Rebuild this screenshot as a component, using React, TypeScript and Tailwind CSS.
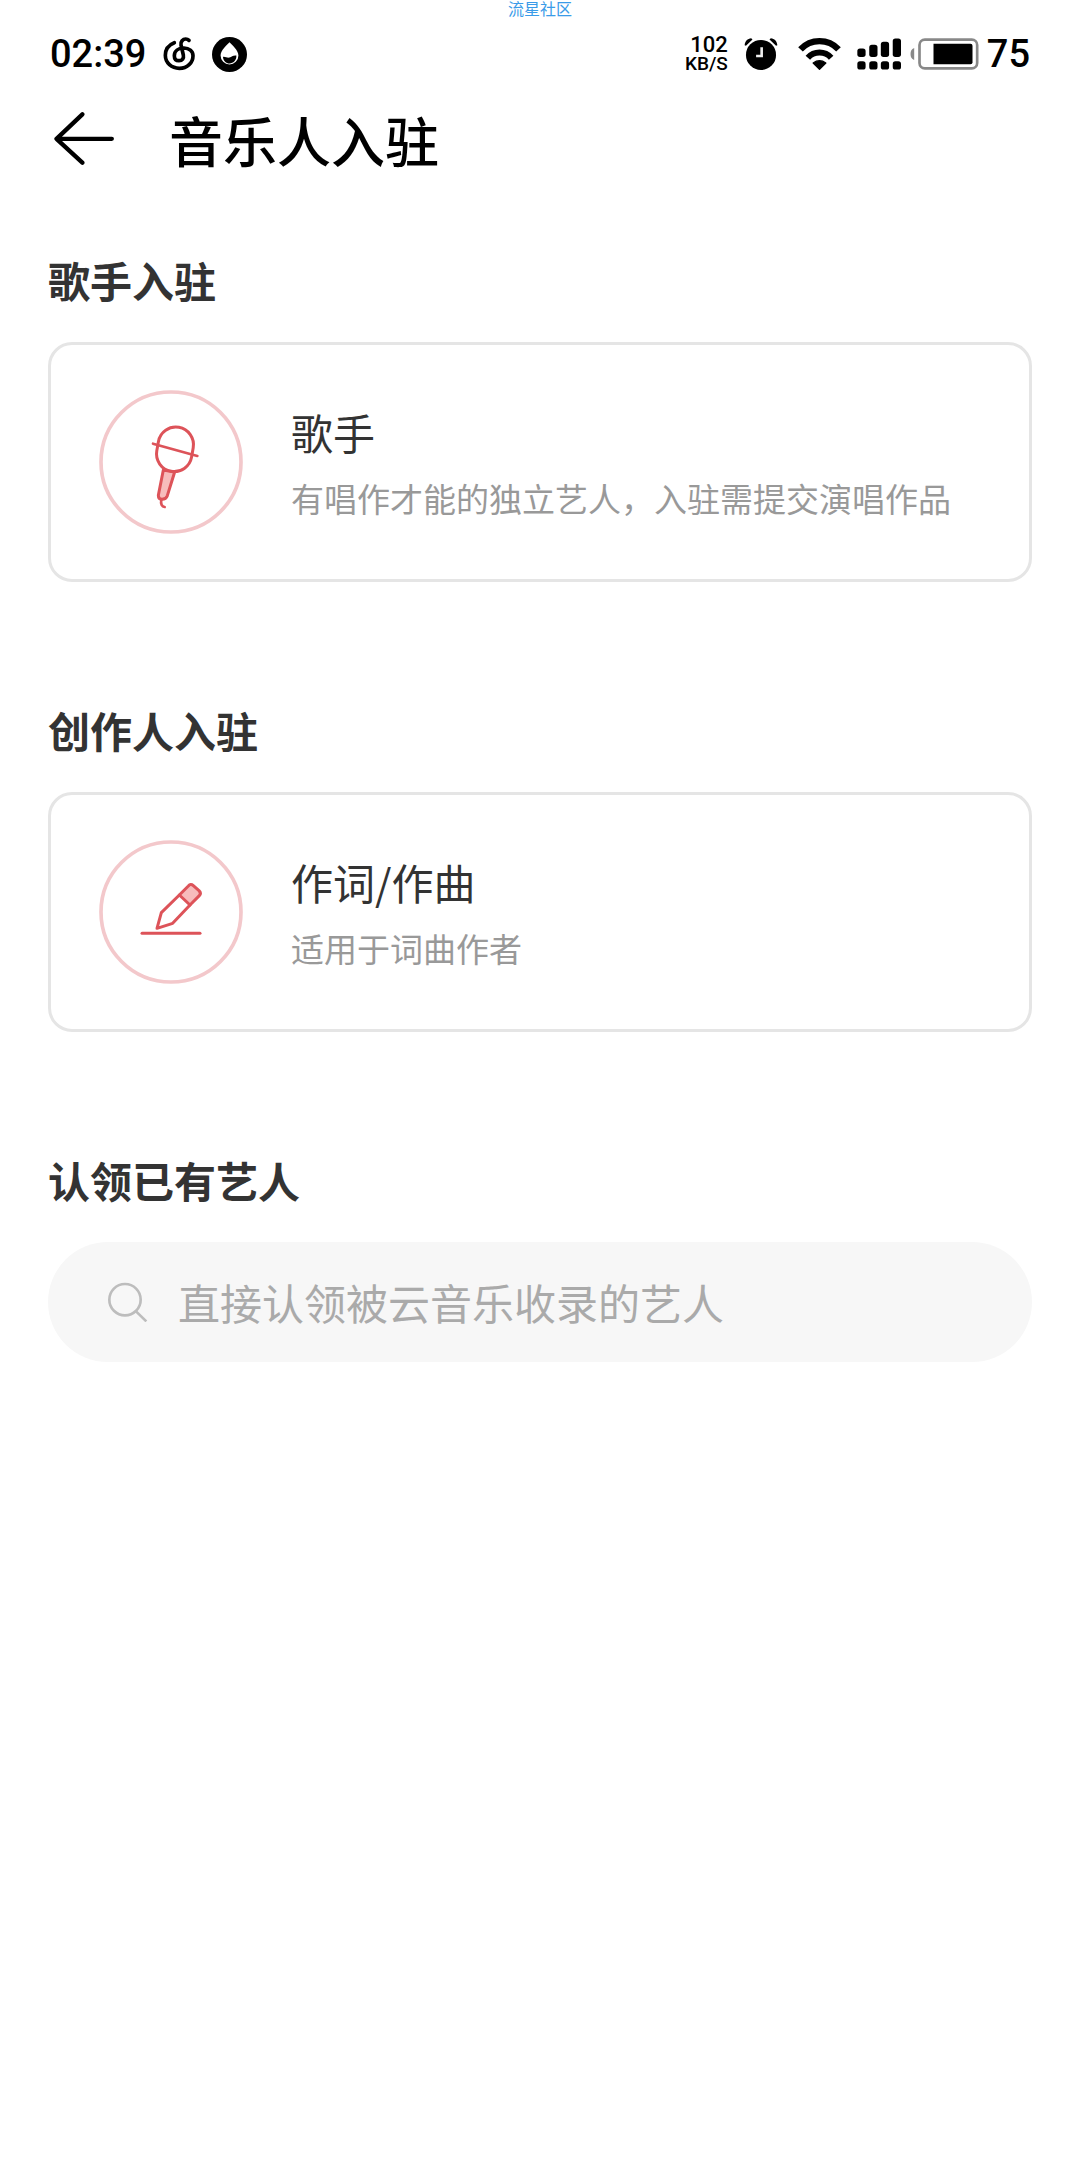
import type { ReactNode } from "react";

const MicIcon = () => (
  <svg viewBox="0 0 432 432" className="size-36 shrink-0" fill="none" aria-hidden="true">
    <circle cx="216" cy="216" r="210" stroke="#f3c8cb" strokeWidth="11" />
    <g stroke="#dd5359" strokeWidth="9" strokeLinecap="round" strokeLinejoin="round">
      <path d="M193 240 L178 316 Q178 328 189 328 Q201 328 205 317 L227 246 Z" fill="#f7bcbc" />
      <rect x="175" y="111" width="106" height="134" rx="53" transform="rotate(10 228 178)" fill="#fff" />
      <path d="M162 161 L295 198" strokeWidth="8" />
      <path d="M187 330 C184 342 189 350 197 351" strokeWidth="8" />
    </g>
  </svg>
);

const PenIcon = () => (
  <svg viewBox="0 0 432 432" className="size-36 shrink-0" fill="none" aria-hidden="true">
    <circle cx="216" cy="216" r="210" stroke="#f3c8cb" strokeWidth="11" />
    <g stroke="#dd5359" strokeWidth="9" strokeLinecap="round" strokeLinejoin="round">
      <path d="M241 165 L268 138 Q275 130 283 137 L300 152 Q308 160 301 167 L273 195 Z" fill="#f7bcbc" />
      <path d="M241 165 L187 218 L174 265 L221 250 L273 195" />
      <path d="M129 280 H303" />
    </g>
  </svg>
);

const sections = [
  {
    heading: "歌手入驻",
    title: "歌手",
    description: "有唱作才能的独立艺人，入驻需提交演唱作品",
    icon: <MicIcon />,
  },
  {
    heading: "创作人入驻",
    title: "作词/作曲",
    description: "适用于词曲作者",
    icon: <PenIcon />,
  },
];

function StatusBar() {
  return (
    <div className="flex h-[76px] items-center justify-between px-[50px] font-[Roboto,sans-serif] font-medium text-black">
      <div className="flex items-center gap-[17px]">
        <span className="text-[38px] leading-10">02:39</span>
        <svg viewBox="0 0 96 102" className="h-[34px] w-8" fill="none" stroke="#000" strokeWidth="11" strokeLinecap="round">
          <path d="M34 17 C16 24 7 39 7 55 C7 78 26 94 49 94 C73 94 90 77 90 56 C90 42 78 33 63 33 C46 33 34 42 34 56 C34 66 40 71 48 71 C58 71 63 64 61 54 L54 24 C52 14 60 6 68 6 C72 6 75 7 78 10" />
        </svg>
        <svg viewBox="0 0 102 102" className="size-[35px]">
          <circle cx="51" cy="51" r="51" />
          <path d="M51 15 C45 22 25 38 25 54 a26 26 0 0 0 52 0 C77 38 57 22 51 15Z" fill="#fff" />
          <path d="M32 58 C38 56 44 62 51 60 C58 58 60 53 71 54 C72 68 62 77 51 77 C41 77 33 70 32 58Z" />
        </svg>
      </div>

      <div className="flex items-center gap-5">
        <div className="flex items-center gap-4">
          <div className="flex flex-col items-end">
            <span className="text-[22px] leading-5">102</span>
            <span className="text-[19px] leading-[18px]">KB/S</span>
          </div>
          <svg viewBox="0 0 104 102" className="size-[34px]">
            <circle cx="52" cy="54" r="46" />
            <path d="M2 24 C3 12 11 4 22 3 L26 7 L6 26 Z M102 24 C101 12 93 4 82 3 L78 7 L98 26 Z" />
            <path d="M54 30 V57 H37" fill="none" stroke="#eee" strokeWidth="8" />
          </svg>
        </div>
        <div className="flex items-center gap-2">
          <div className="flex items-center gap-4">
            <svg viewBox="0 0 128 102" className="h-[34px] w-[43px]" fill="none" stroke="#000">
              <path d="M7 37 A78 78 0 0 1 121 37" strokeWidth="19" />
              <path d="M29 62 A47 47 0 0 1 99 62" strokeWidth="18" />
              <path d="M45 78 Q64 64 83 78 L64 97 Z" fill="#000" strokeWidth="4" strokeLinejoin="round" />
            </svg>
            <svg viewBox="0 0 136 102" className="h-[34px] w-[45px]">
              <rect x="1" y="34" width="25" height="26" rx="8" />
              <rect x="37" y="23" width="25" height="37" rx="8" />
              <rect x="72" y="14" width="25" height="46" rx="8" />
              <rect x="108" y="4" width="25" height="56" rx="8" />
              <rect x="1" y="73" width="25" height="25" rx="8" />
              <rect x="37" y="73" width="25" height="25" rx="8" />
              <rect x="72" y="73" width="25" height="25" rx="8" />
              <rect x="108" y="73" width="25" height="25" rx="8" />
            </svg>
          </div>
          <svg viewBox="0 0 206 102" className="h-[34px] w-[69px]">
            <path d="M12 33 C4 36 1 42 1 51 C1 60 4 66 12 69 Z" fill="#888" />
            <rect x="28" y="8" width="173" height="86" rx="16" fill="none" stroke="#888" strokeWidth="8" />
            <path d="M70 20 H181 Q187 20 187 26 V76 Q187 82 181 82 H70 Z" />
          </svg>
          <span className="text-[38px] leading-10">75</span>
        </div>
      </div>
    </div>
  );
}

function Section({ heading, children }: { heading: string; children: ReactNode }) {
  return (
    <section>
      <h2 className="mb-8 text-[42px] leading-[60px] font-bold text-[#333]">{heading}</h2>
      {children}
    </section>
  );
}

export default function App() {
  return (
    <div className="min-h-screen bg-white font-['Noto_Sans_CJK_SC',sans-serif]">
      <p className="h-4 text-center text-base leading-4 text-[#3a9be8]">流星社区</p>
      <StatusBar />

      <header className="flex h-[92px] items-center gap-[55px] px-[54px]">
        <button type="button" aria-label="返回">
          <svg viewBox="0 0 180 160" className="h-[53px] w-[60px]" fill="none" stroke="#000" strokeWidth="13" strokeLinecap="round" strokeLinejoin="round">
            <path d="M7 81 H174 M85 7 L7 81 L85 153" />
          </svg>
        </button>
        <h1 className="pt-1 text-[54px] leading-[72px] font-medium text-black">音乐人入驻</h1>
      </header>

      <main className="flex flex-col gap-[118px] px-12 pt-[66px] pb-12">
        {sections.map((section) => (
          <Section key={section.heading} heading={section.heading}>
            <button
              type="button"
              className="flex h-60 w-full items-center gap-12 rounded-3xl border-3 border-[#e5e5e5] px-12 text-left"
            >
              {section.icon}
              <span className="flex flex-col gap-3">
                <span className="text-[42px] leading-[60px] text-[#333]">{section.title}</span>
                <span className="text-[33px] leading-[48px] text-[#999]">{section.description}</span>
              </span>
            </button>
          </Section>
        ))}

        <Section heading="认领已有艺人">
          <label className="flex h-[120px] items-center gap-[30px] rounded-full bg-[#f7f7f7] px-[60px]">
            <svg viewBox="0 0 120 120" className="size-10 shrink-0" fill="none" stroke="#bdbdbd" strokeWidth="8">
              <circle cx="51" cy="53" r="47" />
              <path d="M84 88 L115 118" />
            </svg>
            <input
              type="text"
              aria-label="搜索艺人"
              placeholder="直接认领被云音乐收录的艺人"
              className="h-[60px] min-w-0 flex-1 bg-transparent text-[42px] leading-[60px] text-[#333] outline-none placeholder:text-[#aaa]"
            />
          </label>
        </Section>
      </main>
    </div>
  );
}
